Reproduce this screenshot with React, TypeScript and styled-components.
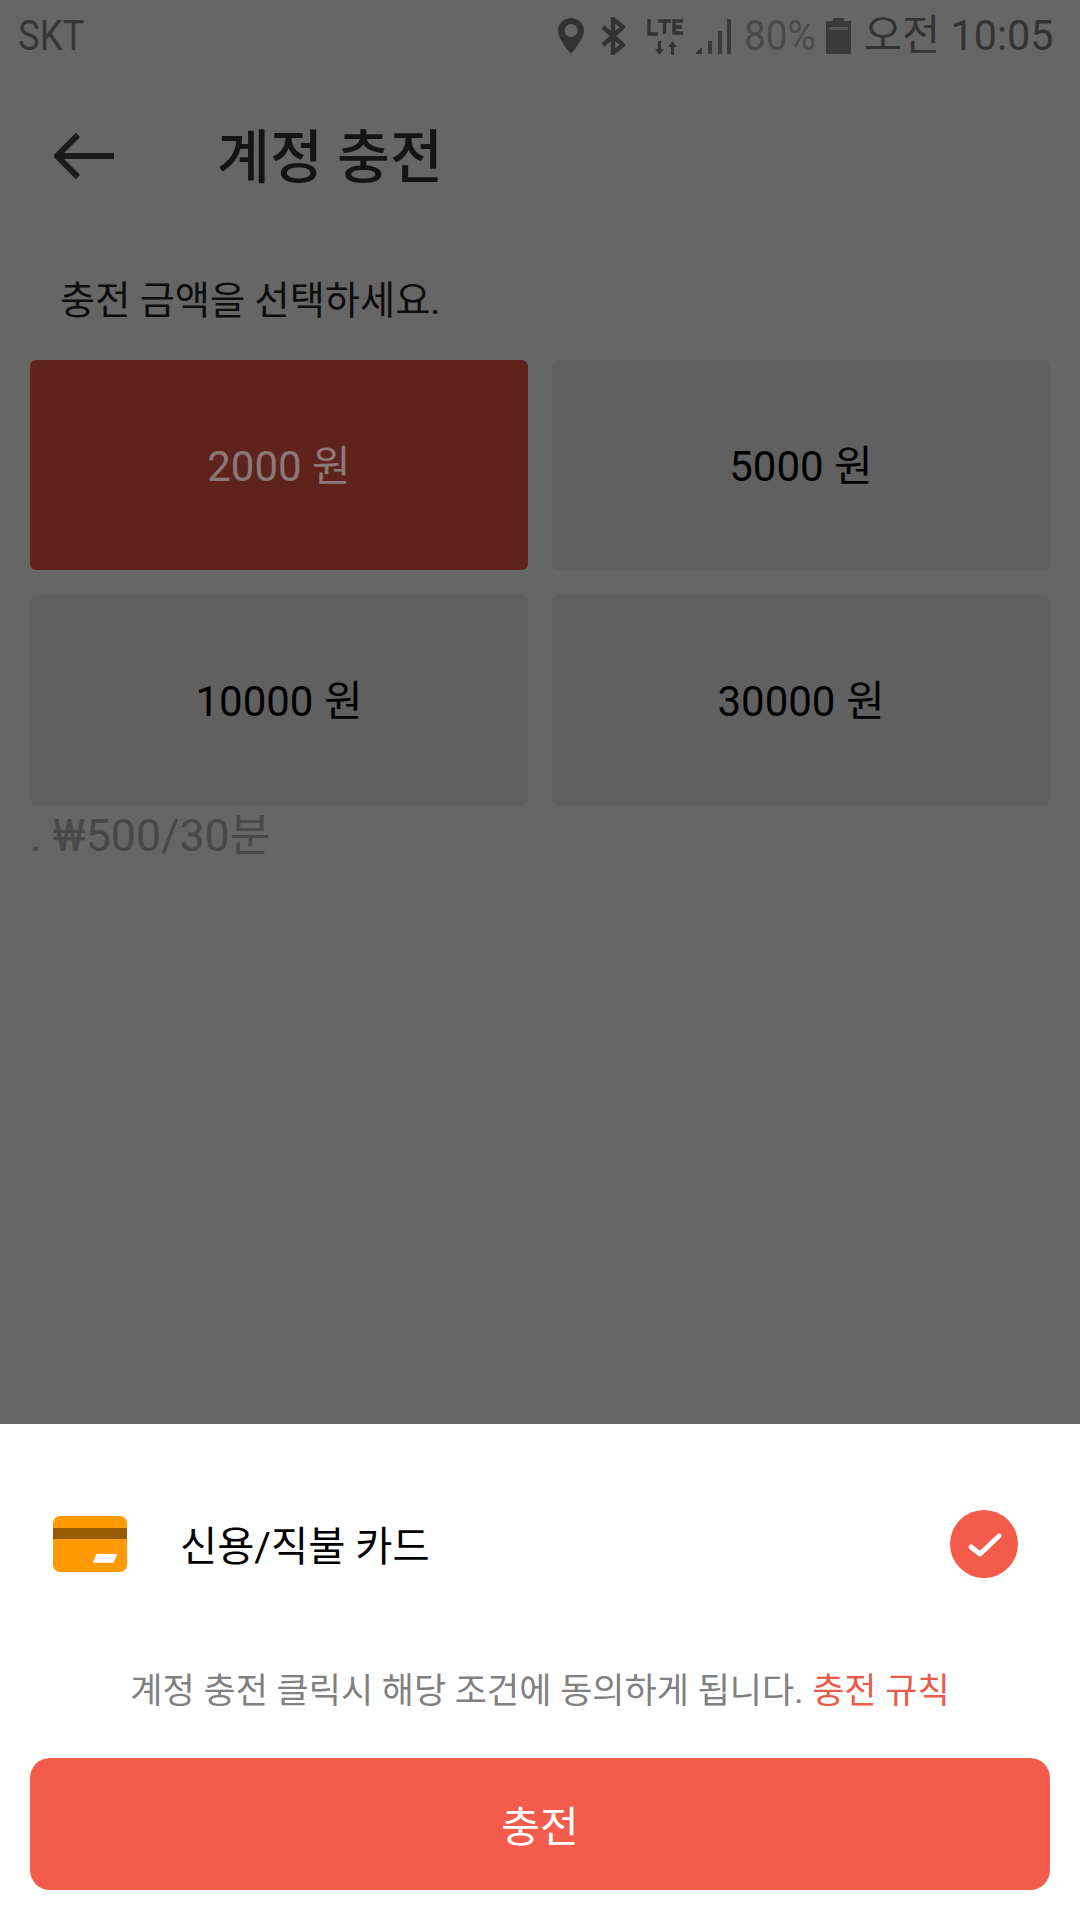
import React from "react";
import styled, { createGlobalStyle } from "styled-components";

const FONT = `Roboto, "Noto Sans CJK KR", sans-serif`;

const GlobalStyle = createGlobalStyle`
  html, body {
    margin: 0;
    padding: 0;
    background: #666666;
  }
  * {
    box-sizing: border-box;
  }
`;

const Page = styled.div`
  display: flex;
  flex-direction: column;
  width: 1080px;
  height: 1920px;
  overflow: hidden;
  background: #666666;
  font-family: ${FONT};
`;

const StatusBar = styled.div`
  display: flex;
  align-items: center;
  justify-content: space-between;
  height: 72px;
  padding: 0 27px 0 18px;
  color: #333333;
`;

const Carrier = styled.span`
  display: inline-block;
  font-size: 42px;
  line-height: 1;
  transform: scaleX(0.87);
  transform-origin: left center;
  color: #363636;
`;

const StatusIcons = styled.div`
  display: flex;
  align-items: center;
`;

const StatusIcon = styled.svg<{ $gap: number }>`
  display: block;
  margin-right: ${(p) => p.$gap}px;
  flex: none;
`;

const Battery = styled.span`
  display: inline-block;
  width: 69px;
  margin-right: 13px;
  font-size: 42px;
  line-height: 1;
  white-space: nowrap;
  color: #4a4a4a;
  transform: scaleX(0.92);
  transform-origin: left center;
`;

const Clock = styled.span`
  display: inline-block;
  width: 189px;
  font-size: 42px;
  line-height: 1;
  white-space: nowrap;
  color: #333333;
  transform: scaleX(0.985);
  transform-origin: left center;
`;

const Header = styled.div`
  display: flex;
  align-items: center;
  height: 168px;
  padding-left: 54px;
`;

const BackIcon = styled.svg`
  display: block;
  flex: none;
  margin-right: 103px;
`;

const Title = styled.h1`
  margin: 5px 0 0;
  font-size: 57.5px;
  font-weight: 500;
  line-height: 1;
  color: #141414;
`;

const Prompt = styled.div`
  display: flex;
  align-items: center;
  height: 120px;
  padding: 0 0 5px 60px;
  font-size: 38.2px;
  color: #0d0d0d;
`;

const Amounts = styled.div`
  display: grid;
  grid-template-columns: 498px 498px;
  grid-template-rows: 210px 210px;
  column-gap: 24px;
  row-gap: 25px;
  padding: 0 30px;
`;

const Amount = styled.div<{ $selected?: boolean }>`
  display: flex;
  align-items: center;
  justify-content: center;
  padding-bottom: 6px;
  border-radius: 6px;
  font-size: 42px;
  background: ${(p) => (p.$selected ? "#5f231c" : "#606060")};
  color: ${(p) => (p.$selected ? "#8a7a77" : "#000000")};
`;

const Note = styled.div`
  display: flex;
  align-items: center;
  height: 60px;
  padding: 0 0 8px 30px;
  font-size: 44.6px;
  color: #484848;
  white-space: pre;
`;

const Spacer = styled.div`
  flex: 1;
`;

const Sheet = styled.div`
  display: flex;
  flex-direction: column;
  height: 496px;
  padding: 86px 30px 30px;
  background: #ffffff;
`;

const PayRow = styled.div`
  display: flex;
  align-items: center;
  height: 68px;
  padding: 0 32px 0 23px;
`;

const CardIcon = styled.svg`
  display: block;
  flex: none;
  margin-right: 53px;
`;

const PayLabel = styled.span`
  flex: 1;
  padding-bottom: 2px;
  font-size: 40.4px;
  color: #000000;
`;

const Terms = styled.div`
  display: flex;
  align-items: center;
  justify-content: center;
  height: 70px;
  margin-top: 74px;
  font-size: 35px;
  color: #808080;
  white-space: pre;
`;

const TermsLink = styled.span`
  color: #e85a4a;
`;

const Charge = styled.button`
  display: flex;
  align-items: center;
  justify-content: center;
  width: 1020px;
  height: 132px;
  margin-top: 36px;
  padding: 0 0 2px;
  border: 0;
  border-radius: 20px;
  background: #f35b4a;
  color: #ffffff;
  font-family: ${FONT};
  font-size: 42px;
`;

function App() {
  return (
    <Page>
      <GlobalStyle />
      <StatusBar>
        <Carrier>SKT</Carrier>
        <StatusIcons>
          <StatusIcon $gap={17} width="26" height="36" viewBox="0 0 26 36">
            <path
              fillRule="evenodd"
              d="M13 0C5.8 0 0 5.7 0 12.8 0 21.500 13 36 13 36s13-14.500 13-23.200C26 5.700 20.200 0 13 0zm0 19a6.500 6.500 0 1 1 0-13 6.500 6.500 0 0 1 0 13z"
              fill="#333333"
            />
          </StatusIcon>
          <StatusIcon $gap={22} width="24" height="38" viewBox="0 0 24 38">
            <path
              d="M2 10l20 18-10 8V2l10 8L2 28"
              fill="none"
              stroke="#333333"
              strokeWidth="4.5"
            />
          </StatusIcon>
          <StatusIcon $gap={11} width="37" height="37" viewBox="0 0 37 37">
            <path
              d="M2 1v15h9M11 3h13M17.5 3v13M36 3h-9v12h9M27 9h8"
              fill="none"
              stroke="#333333"
              strokeWidth="3.4"
            />
            <path d="M11 23v8h-3l4.500 6 4.500-6h-3v-8z" fill="#333333" />
            <path d="M24 37v-8h-3l4.500-6 4.500 6h-3v8z" fill="#333333" />
          </StatusIcon>
          <StatusIcon $gap={13} width="36" height="36" viewBox="0 0 36 36">
            <path d="M0 36l7-7v7z" fill="#333333" />
            <path
              d="M13 23h4v13h-4zM23 13h4v23h-4zM32 1h4v35h-4z"
              fill="#3a3a3a"
            />
          </StatusIcon>
          <Battery>80%</Battery>
          <StatusIcon $gap={13} width="25" height="36" viewBox="0 0 25 36">
            <path d="M7 0h11v3h7v33H0V3h7z" fill="#3a3a3a" />
            <path d="M3 9h19v3H3z" fill="#555555" />
          </StatusIcon>
          <Clock>오전 10:05</Clock>
        </StatusIcons>
      </StatusBar>
      <Header>
        <BackIcon width="60" height="46" viewBox="0 0 60 46">
          <path
            d="M60 23H4M24 2L3 23l21 21"
            fill="none"
            stroke="#1a1a1a"
            strokeWidth="6"
          />
        </BackIcon>
        <Title>계정 충전</Title>
      </Header>
      <Prompt>충전 금액을 선택하세요.</Prompt>
      <Amounts>
        <Amount $selected>2000 원</Amount>
        <Amount>5000 원</Amount>
        <Amount>10000 원</Amount>
        <Amount>30000 원</Amount>
      </Amounts>
      <Note>. ₩500/30분</Note>
      <Spacer />
      <Sheet>
        <PayRow>
          <CardIcon width="74" height="56" viewBox="0 0 74 56">
            <rect width="74" height="56" rx="7" fill="#ff9a05" />
            <rect y="12" width="74" height="11" fill="#985c03" />
            <path d="M43.7 38h20.6l-4 8.7H39.7z" fill="#ffffff" />
          </CardIcon>
          <PayLabel>신용/직불 카드</PayLabel>
          <svg width="68" height="68" viewBox="0 0 68 68">
            <circle cx="34" cy="34" r="34" fill="#f35b4a" />
            <path
              d="M21 37l9 7 19-18"
              fill="none"
              stroke="#ffffff"
              strokeWidth="5"
              strokeLinecap="round"
              strokeLinejoin="round"
            />
          </svg>
        </PayRow>
        <Terms>
          계정 충전 클릭시 해당 조건에 동의하게 됩니다. <TermsLink>충전 규칙</TermsLink>
        </Terms>
        <Charge>충전</Charge>
      </Sheet>
    </Page>
  );
}

export default App;
